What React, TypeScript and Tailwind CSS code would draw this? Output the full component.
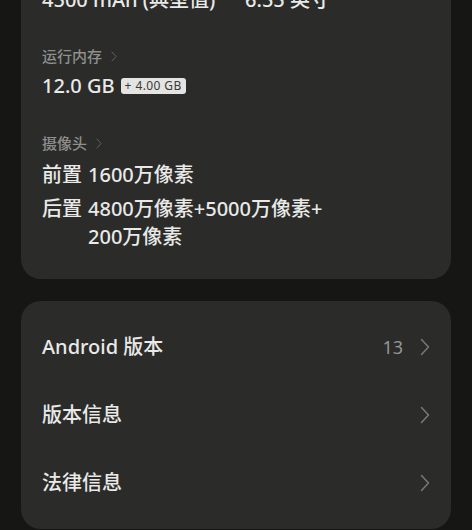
const font = { fontFamily: '"Noto Sans", "Noto Sans CJK SC", sans-serif' }

const rows = [
  { label: "Android 版本", value: "13" },
  { label: "版本信息", value: "" },
  { label: "法律信息", value: "" },
]

function Chevron({ className }: { className?: string }) {
  return (
    <svg viewBox="0 0 10 18" fill="none" stroke="currentColor" strokeWidth={1.4} strokeLinecap="round" strokeLinejoin="round" className={className}>
      <path d="M1.5 1.5 L8.5 9 L1.5 16.5" />
    </svg>
  )
}

function Label({ text }: { text: string }) {
  return (
    <div className="flex items-center gap-[9px] text-[15px] leading-[22px] text-[#8e8f8d]">
      <span>{text}</span>
      <Chevron className="h-[11px] w-[6px] text-[#6c6d6b]" />
    </div>
  )
}

export default function App() {
  return (
    <div className="h-[530px] overflow-hidden bg-[#161715] px-[21px]" style={font}>
      {/* Specs card */}
      <div className="-mt-[40px] rounded-[20px] bg-[#2b2c2a] pl-[21px] pr-[20px] pt-[26px] pb-[28px] font-medium text-[#e9e9e7]">
        <div className="flex text-[20px] leading-[28px]">
          <span className="w-[203px]">4500 mAh (典型值)</span>
          <span>6.55 英寸</span>
        </div>

        <div className="mt-[31px]">
          <Label text="运行内存" />
          <div className="mt-[5px] flex items-center gap-[6px] text-[20px] leading-[28px]">
            <span>12.0 GB</span>
            <span className="rounded-[3px] bg-[#e4e4e2] px-[4px] text-[12px] font-normal leading-[16px] tracking-[0.4px] text-[#3a3a3a]">
              + 4.00 GB
            </span>
          </div>
        </div>

        <div className="mt-[32px]">
          <Label text="摄像头" />
          <div className="mt-[7px] flex text-[20px] leading-[28px]">
            <span className="w-[46px] shrink-0">前置</span>
            <span>1600万像素</span>
          </div>
          <div className="mt-[6px] flex text-[20px] leading-[28px]">
            <span className="w-[46px] shrink-0">后置</span>
            <div className="flex flex-col">
              <span>4800万像素+5000万像素+</span>
              <span>200万像素</span>
            </div>
          </div>
        </div>
      </div>

      {/* Info list card */}
      <div className="mt-[22px] rounded-[20px] bg-[#2b2c2a] pt-[12px] pb-[12px]">
        {rows.map((row) => (
          <div key={row.label} className="flex h-[68px] items-center pl-[21px] pr-[21px]">
            <span className="flex-1 text-[20px] font-medium text-[#e9e9e7]">{row.label}</span>
            {row.value && <span className="mr-[17px] text-[18px] text-[#959694]">{row.value}</span>}
            <Chevron className="h-[18px] w-[10px] text-[#7b7c7a]" />
          </div>
        ))}
      </div>
    </div>
  )
}
